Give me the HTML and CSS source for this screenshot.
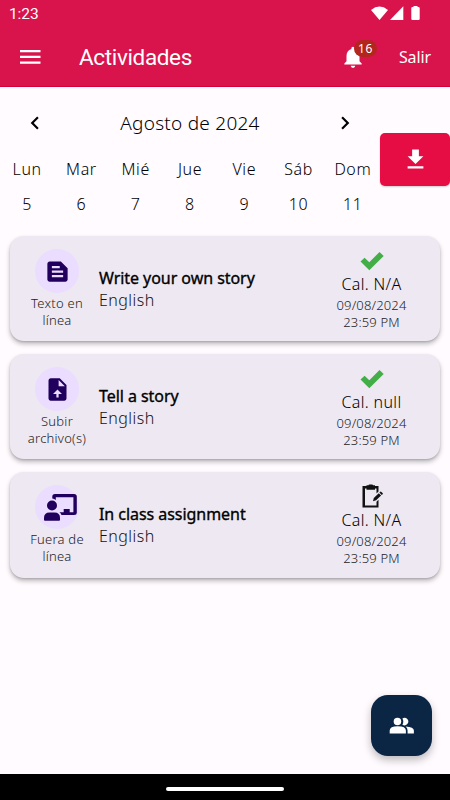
FILE: index.html
```html
<!DOCTYPE html>
<html lang="es">
<head>
<meta charset="utf-8">
<title>Actividades</title>
<link rel="stylesheet" href="styles.css">
</head>
<body>
<div class="app">
  <header class="top">
    <div class="status">
      <span>1:23</span>
      <svg class="status-icons" width="52" height="16" viewBox="0 0 52 16"><path d="M1 4Q9.500-2.800 18 4L9.500 14Z"/><path d="M20 14L33.300.3V14Z"/><path d="M43.500 1v-1h4v1h1q1.200 0 1.200 1.200v10.800q0 1-1.200 1h-6q-1.200 0-1.200-1V2.200Q41.300 1 42.500 1Z"/></svg>
    </div>
    <div class="bar">
      <svg class="menu" width="21" height="14" viewBox="0 0 21 14"><path d="M0 0h20.500v2.200H0zM0 5.800h20.500V8H0zM0 11.500h20.500v2.200H0z"/></svg>
      <h1>Actividades</h1>
      <div class="bell">
        <svg width="26" height="26" viewBox="0 0 24 24"><path d="M12 22c1.100 0 2-.9 2-2h-4c0 1.100.9 2 2 2zm6-6v-5c0-3.070-1.640-5.640-4.500-6.320V4c0-.83-.67-1.500-1.500-1.500s-1.500.67-1.500 1.500v.68C7.630 5.360 6 7.920 6 11v5l-2 2v1h16v-1l-2-2z"/></svg>
        <span class="badge">16</span>
      </div>
      <span class="exit">Salir</span>
    </div>
  </header>
  <section class="calendar">
    <div class="week">
      <div class="month">
        <svg width="26" height="26" viewBox="0 0 24 24"><path d="M15.410 7.410L14 6l-6 6 6 6 1.410-1.410L10.830 12z"/></svg>
        <span>Agosto de 2024</span>
        <svg width="26" height="26" viewBox="0 0 24 24"><path d="M10 6L8.590 7.410 13.170 12l-4.580 4.590L10 18l6-6z"/></svg>
      </div>
      <div class="days"><span>Lun</span><span>Mar</span><span>Mié</span><span>Jue</span><span>Vie</span><span>Sáb</span><span>Dom</span></div>
      <div class="days dates"><span>5</span><span>6</span><span>7</span><span>8</span><span>9</span><span>10</span><span>11</span></div>
    </div>
    <div class="download"><svg width="27" height="27" viewBox="0 0 24 24"><path d="M19 9h-4V3H9v6H5l7 7 7-7zM5 18v2h14v-2H5z"/></svg></div>
  </section>
  <main class="list">
    <article class="card">
      <div class="type">
        <div class="circle"><svg width="27" height="27" viewBox="0 0 24 24"><path fill-rule="evenodd" d="M15 3H5c-1.100 0-2 .9-2 2v14c0 1.100.9 2 2 2h14c1.100 0 2-.9 2-2V9l-6-6zM7 7h7v2H7V7zm10 10H7v-2h10v2zm0-4H7v-2h10v2z"/></svg></div>
        <span>Texto en<br>línea</span>
      </div>
      <div class="info"><h2>Write your own story</h2><p>English</p></div>
      <div class="grade">
        <svg class="check" width="24" height="20" viewBox="0 0 24 20"><path d="M.5 10.500L4.600 6.700L9.300 11.300L19.500 1L23.700 5L9.300 19.200Z"/></svg>
        <strong>Cal. N/A</strong><span>09/08/2024<br>23:59 PM</span>
      </div>
    </article>
    <article class="card">
      <div class="type">
        <div class="circle"><svg width="27" height="27" viewBox="0 0 24 24"><path d="M14 2H6c-1.100 0-1.990.9-1.990 2L4 20c0 1.100.89 2 1.990 2H18c1.100 0 2-.9 2-2V8l-6-6zm4 7h-5V3.500L18.500 9zM13 16v3h-2v-3H8l4-4 4 4z" fill-rule="evenodd"/></svg></div>
        <span>Subir<br>archivo(s)</span>
      </div>
      <div class="info"><h2>Tell a story</h2><p>English</p></div>
      <div class="grade">
        <svg class="check" width="24" height="20" viewBox="0 0 24 20"><path d="M.5 10.500L4.600 6.700L9.300 11.300L19.500 1L23.700 5L9.300 19.200Z"/></svg>
        <strong>Cal. null</strong><span>09/08/2024<br>23:59 PM</span>
      </div>
    </article>
    <article class="card">
      <div class="type">
        <div class="circle"><svg class="teacher" width="34" height="28" viewBox="0 0 34 28"><circle cx="9" cy="12.500" r="5"/><path d="M1 27v-2q0-5.500 5.500-5.500h5q5.500 0 5.500 5.500v2q0 .7-1 .7H2q-1 0-1-.7z"/><path d="M9.300 5V3.500Q9.300 1 12 1h19q2.800 0 2.800 2.500v16q0 2.500-2.800 2.500H18.500q-.5-1.500-2-2.700h4.200V16h6v3.300h3.700V4.200H12.800V7Q11.200 5.700 9.300 5.500z"/></svg></div>
        <span>Fuera de<br>línea</span>
      </div>
      <div class="info"><h2>In class assignment</h2><p>English</p></div>
      <div class="grade">
        <svg class="clip" width="22" height="24" viewBox="0 0 22 24"><path d="M5.500 1.300H7.500Q7.500.5 8.500.5h2.500q1 0 1 .8h2V2h3.500v5.500L15.500 9.500V4.500H14v1.300H5.500V4.500H4v17h11.500V17.700l2-2v7.800H1.500V2h4z"/><path d="M12 17.300l.8-3.300 5-4.800 2.300 2.300-5 4.800zM18.400 8.600l.9-.8q.6-.4 1.100.1l1.200 1.200q.5.600 0 1.100l-.9.8z"/></svg>
        <strong>Cal. N/A</strong><span>09/08/2024<br>23:59 PM</span>
      </div>
    </article>
  </main>
  <div class="fab"><svg width="27" height="27" viewBox="0 0 24 24"><circle cx="8.400" cy="8.500" r="3.350"/><path d="M1.500 19v-2.500q0-3.800 7.200-3.800t7.200 3.800V19zM12.800 5.700a3.350 3.350 0 1 1 0 5.600q.8-1.100.8-2.800t-.8-2.800zM15.700 12.900q7.300.3 7.300 3.600V19h-5.600v-2.500q0-2.200-1.700-3.600z"/></svg></div>
  <footer class="nav"><div class="pill"></div></footer>
</div>
</body>
</html>
```
FILE: styles.css
```css
* { box-sizing: border-box; }
body { margin: 0; }
h1, h2, p { margin: 0; font-weight: 400; }
svg { display: block; flex: none; fill: currentColor; }
.app { position: relative; width: 450px; height: 800px; overflow: hidden; background: #fffbff; color: #000; font-family: "Noto Sans", sans-serif; font-weight: 300; display: flex; flex-direction: column; }
.top { height: 87px; flex: none; background: #d9134c; border-bottom: 1px solid #d3003a; color: #fff; }
.status { height: 27px; display: flex; justify-content: space-between; padding: 4px 27px 0 9px; font: 15.500px/20px Roboto, sans-serif; letter-spacing: -.1px; }
.status-icons { margin-top: 2px; margin-right: 1px; }
.bar { height: 60px; display: flex; align-items: center; padding: 0 19px 0 20px; }
.menu { margin-right: 38px; }
h1 { font: 22.500px/30px Roboto, sans-serif; letter-spacing: -.35px; width: 262px; }
.bell { position: relative; width: 58px; left: -1px; }
.badge { position: absolute; left: 14px; top: -4px; width: 23px; height: 17px; border-radius: 9px; background: #b3261e; font-size: 12px; font-weight: 400; line-height: 17px; text-align: center; letter-spacing: .5px; }
.exit { font-size: 16px; font-weight: 400; letter-spacing: -.1px; }
.calendar { display: flex; height: 149px; flex: none; }
.week { width: 380px; }
.month { height: 72px; padding: 0 22px; display: flex; align-items: center; justify-content: space-between; font-size: 19px; letter-spacing: .25px; }
.days { display: grid; grid-template-columns: repeat(7, 1fr); text-align: center; font-size: 16px; line-height: 20px; letter-spacing: .6px; }
.dates { margin-top: 15px; }
.download { width: 70px; height: 53px; margin-top: 46px; border-radius: 5px; background: #e60d45; color: #fff; display: flex; align-items: center; justify-content: center; box-shadow: 0 1px 2px #0003; }
.list { padding: 0 10px; display: flex; flex-direction: column; gap: 13px; }
.card { height: 105.200px; border-radius: 14px; background: #eee8f2; display: flex; box-shadow: 0 3px 5px #0004, 0 1px 2px #0002; }
.type { width: 89px; padding: 13px 0 0 5px; display: flex; flex-direction: column; align-items: center; text-align: center; font-size: 13px; line-height: 17.600px; letter-spacing: .25px; color: #222; }
.circle { width: 44px; height: 44px; border-radius: 50%; background: #eaddff; color: #21005d; display: flex; align-items: center; justify-content: center; margin-bottom: 1.500px; }
.teacher { margin-left: 6px; }
.info { flex: 1; padding-top: 30.500px; }
h2 { font-size: 16px; line-height: 22px; letter-spacing: -.05px; -webkit-text-stroke: .35px #000; white-space: nowrap; }
.info p { font-size: 16px; font-weight: 300; line-height: 22px; letter-spacing: .45px; color: #111; }
.grade { width: 137px; padding-top: 15px; display: flex; flex-direction: column; align-items: center; text-align: center; font-size: 13px; line-height: 17.600px; letter-spacing: .15px; color: #222; }
.grade strong { font-size: 16px; line-height: 23.500px; font-weight: 300; letter-spacing: .35px; color: #000; }
.check { color: #43ae47; height: 20px; margin-bottom: 2px; }
.clip { margin: -3px 0 1px; color: #111; }
.fab { position: absolute; left: 371px; top: 695px; width: 61px; height: 61px; border-radius: 17px; background: #0b2545; color: #fff; display: flex; align-items: center; justify-content: center; box-shadow: 0 4px 8px #0004; }
.nav { height: 26px; margin-top: auto; background: #000; display: flex; justify-content: center; padding-top: 13px; }
.pill { width: 118px; height: 4px; border-radius: 2px; background: #fff; }
```
